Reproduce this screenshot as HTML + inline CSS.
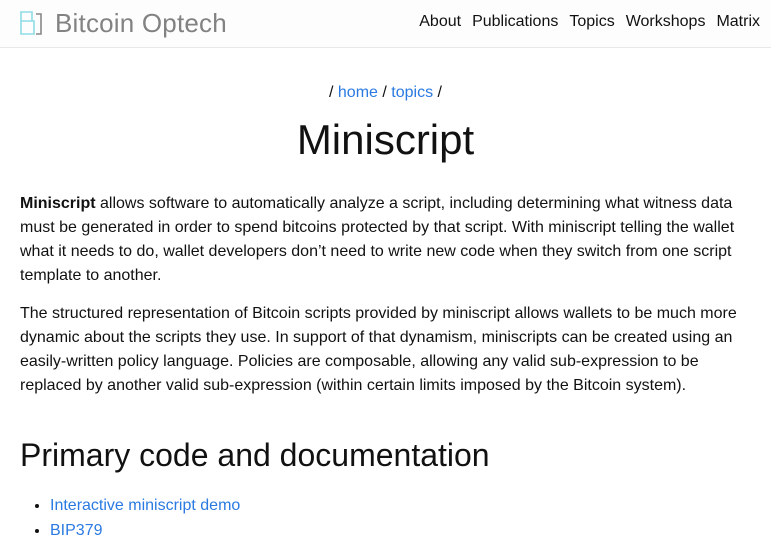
<!DOCTYPE html>
<html><head><style>
body{margin:0;background:#fff;font-family:"Liberation Sans",sans-serif;color:#111;width:771px;overflow:hidden}
.hdr{height:47px;border-bottom:1px solid #e8e8e8;position:relative;background:#fdfdfd}
.logo{position:absolute;left:20px;top:8px;display:flex;align-items:center}
.logo span{font-size:26px;color:#828282;margin-left:11px;letter-spacing:0.2px}
nav{position:absolute;right:11px;top:13px;font-size:16px}
nav a{color:#111;text-decoration:none;margin-left:11px}
.bc{text-align:center;font-size:16px;margin-top:36px;color:#111}
a{color:#2a7ae2;text-decoration:none}
h1{text-align:center;font-weight:400;font-size:42px;margin:12px 0 0;line-height:52px}
p{margin:0 20px 14px;font-size:16px;line-height:24px}
h2{font-weight:400;font-size:32px;margin:37px 20px 18px;line-height:40px}
ul{margin:0;padding-left:50px;font-size:16px;line-height:25px}
</style></head><body>
<div class="hdr"><div class="logo"><svg width="24" height="26" viewBox="0 0 24 26"><path d="M1 1h11v9H1zM1 10h13v13H1z" fill="none" stroke="#8fdbe6" stroke-width="1.6"/><path d="M16 3h5v20h-5" fill="none" stroke="#888" stroke-width="1.6"/></svg><span>Bitcoin Optech</span></div>
<nav><a>About</a><a>Publications</a><a>Topics</a><a>Workshops</a><a>Matrix</a></nav></div>
<div class="bc">/ <a>home</a> / <a>topics</a> /</div>
<h1>Miniscript</h1>
<p style="margin-top:26px"><b>Miniscript</b> allows software to automatically analyze a script, including determining what witness data must be generated in order to spend bitcoins protected by that script. With miniscript telling the wallet what it needs to do, wallet developers don’t need to write new code when they switch from one script template to another.</p>
<p>The structured representation of Bitcoin scripts provided by miniscript allows wallets to be much more dynamic about the scripts they use. In support of that dynamism, miniscripts can be created using an easily-written policy language. Policies are composable, allowing any valid sub-expression to be replaced by another valid sub-expression (within certain limits imposed by the Bitcoin system).</p>
<h2>Primary code and documentation</h2>
<ul><li><a>Interactive miniscript demo</a></li><li><a>BIP379</a></li></ul>
</body></html>
